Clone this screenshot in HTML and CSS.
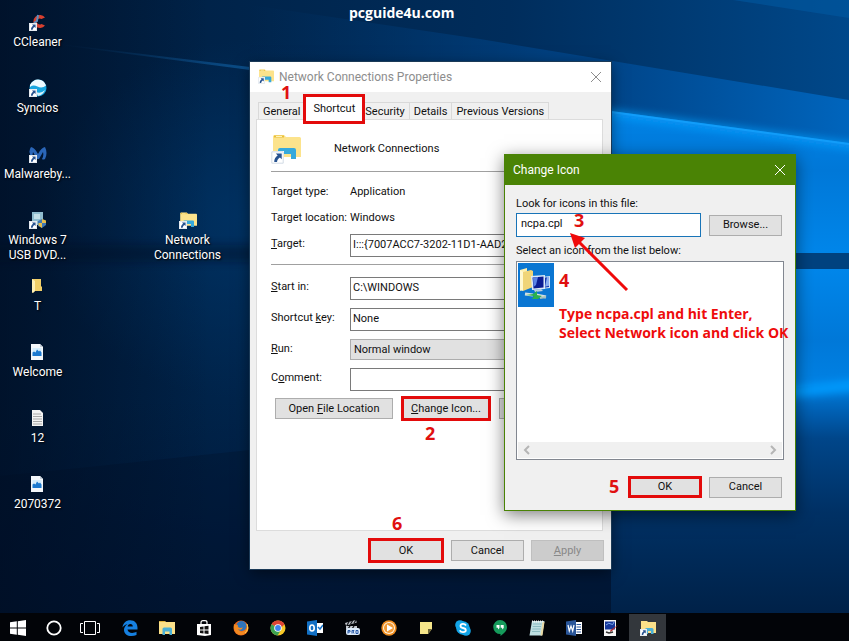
FILE: index.html
```html
<!DOCTYPE html>
<html lang="en">
<head>
<meta charset="utf-8">
<title>Change the icon of a shortcut</title>
<link rel="stylesheet" href="styles.css">
</head>
<body>
<svg class="defs" aria-hidden="true">
  <defs>
    <symbol id="arrow-badge" viewBox="0 0 8 8">
      <path d="M0 0h8v8H0z" fill="#fff"/><path d="M.5 .5h7v7h-7z" fill="none" stroke="#c9d3df" stroke-width=".5"/>
      <path d="M3 1.500h3.600v3.600L5.500 4C4.300 4.700 3.800 5.600 3.700 6.800H2C1.900 4.900 2.700 3.600 4.100 2.700z" fill="#27528f"/>
    </symbol>
    <symbol id="folder" viewBox="0 0 30 30">
      <path d="M2 2.500Q2 1 3.500 1H13l2 2h13.500q1.500 0 1.500 1.500V23H2z" fill="#fce38c"/>
      <path d="M3 1.500h10v2H3z" fill="#e8bf3c"/><path d="M5 2h6v1H5z" fill="#fff3b8"/>
      <path d="M7 24v-8q0-2 2-2h14q2 0 2 2v9h-5v-5h-8v4z" fill="#36a9dc"/>
    </symbol>
    <symbol id="picture" viewBox="0 0 16 18">
      <path d="M2 1h9l3 3v13H2z" fill="#f4f7fa"/><path d="M11 1l3 3h-3z" fill="#c5cfda"/>
      <path d="M3.500 5h9v8h-9z" fill="#d4ecfb"/><path d="M3.500 13V9.500l1.500-1 1.500 1L8 6.500l2 2 1-1 1.500 2V13z" fill="#1c79cf"/>
    </symbol>
    <linearGradient id="sky" x1="0" x2="1" y1="0" y2="0">
      <stop offset="0" stop-color="#001c3c"/><stop offset=".28" stop-color="#00244b"/>
      <stop offset=".6" stop-color="#002d5c"/><stop offset="1" stop-color="#00488a"/>
    </linearGradient>
    <linearGradient id="floor" x1="0" x2="0" y1="0" y2="1">
      <stop offset="0" stop-color="#001a3a" stop-opacity="0"/><stop offset=".6" stop-color="#00183a" stop-opacity=".8"/>
      <stop offset="1" stop-color="#001634"/>
    </linearGradient>
    <linearGradient id="shade" x1="0" x2="1" y1="0" y2="0">
      <stop offset="0" stop-color="#000c20" stop-opacity=".6"/><stop offset="1" stop-color="#000c20" stop-opacity="0"/>
    </linearGradient>
    <linearGradient id="beam" gradientUnits="userSpaceOnUse" x1="250" x2="849" y1="0" y2="0">
      <stop offset="0" stop-color="#003a74" stop-opacity="0"/><stop offset=".6" stop-color="#00488f" stop-opacity=".85"/>
      <stop offset="1" stop-color="#0065bd"/>
    </linearGradient>
    <linearGradient id="ray" gradientUnits="userSpaceOnUse" x1="60" x2="250" y1="0" y2="0">
      <stop offset="0" stop-color="#0e5796" stop-opacity="0"/><stop offset="1" stop-color="#0e5796" stop-opacity=".8"/>
    </linearGradient>
    <linearGradient id="pane" x1="0" x2="0" y1="0" y2="1">
      <stop offset="0" stop-color="#0086ea"/><stop offset=".5" stop-color="#0078d8"/><stop offset="1" stop-color="#0086ea"/>
    </linearGradient>
    <linearGradient id="low" x1="0" x2="0" y1="0" y2="1">
      <stop offset="0" stop-color="#0083e6"/><stop offset=".12" stop-color="#005fb2"/>
      <stop offset=".22" stop-color="#00468a"/><stop offset=".5" stop-color="#003165"/><stop offset="1" stop-color="#001d40"/>
    </linearGradient>
    <radialGradient id="glow"><stop offset="0" stop-color="#003568" stop-opacity=".8"/><stop offset="1" stop-color="#003568" stop-opacity="0"/></radialGradient>
    <filter id="soft" x="-10%" width="120%" y="-100%" height="300%"><feGaussianBlur stdDeviation="4"/></filter>
  </defs>
</svg>

<main class="desktop">
  <svg class="wallpaper" viewBox="0 0 849 641" preserveAspectRatio="none" aria-hidden="true">
    <path d="M0 0h849v641H0z" fill="url(#sky)"/>
    <ellipse cx="250" cy="220" rx="210" ry="180" fill="url(#glow)"/>
    <path d="M733 0L849 18V0z" fill="#005ba6" opacity=".5"/>
    <path d="M250 5L480 39 849 100V145L611 111 250 67z" fill="url(#beam)"/>
    <path d="M60 44L250 67v3L60 45z" fill="url(#ray)"/>
    <path d="M611 111L849 143V255H400V86z" fill="url(#pane)"/>
    <path d="M600 112L860 147" stroke="#0aa0ff" stroke-width="7" opacity=".8" filter="url(#soft)"/>
    <path d="M611 112L849 144" stroke="#17a4ff" stroke-width="2" opacity=".7"/>
    <path d="M611 253H849V269H611z" fill="#00427f"/>
    <path d="M-20 245H270V262H-20z" fill="#001024" opacity=".4" filter="url(#soft)"/>
    <path d="M611 269H849V382L611 410z" fill="url(#pane)"/>
    <path d="M611 410L849 381V641H611z" fill="url(#low)"/>
    <path d="M700 401L860 385" stroke="#009cff" stroke-width="10" filter="url(#soft)"/>
    <path d="M0 400H611V641H0z" fill="url(#floor)"/>
    <path d="M0 476L90 467 250 450 611 411V641H0z" fill="#001027" opacity=".3"/>
    <path d="M0 0H210V641H0z" fill="url(#shade)"/>
  </svg>

  <p class="watermark">pcguide4u.com</p>

  <ul class="icons">
    <li>
      <svg viewBox="0 0 18 18"><path d="M16 4.500A6.500 6.500 0 1 0 16 12.500l-3.500-1.500a3 3 0 1 1 0-5z" fill="#d8402f"/><path d="M9 2l-1 6-3 2" stroke="#5b8fc0" stroke-width="2" fill="none"/><use href="#arrow-badge" y="10" width="8" height="8"/></svg>
      <span>CCleaner</span>
    </li>
    <li>
      <svg viewBox="0 0 18 18"><circle cx="9" cy="9" r="8.500" fill="#18a5df"/><path d="M1 6Q4 .5 9 .5q6 0 8 6Q13 10 8.500 7.500 4 5.500 1 8z" fill="#eefaff"/><path d="M7 13q5 2 9-2-2 5-7 6z" fill="#d8f2fc"/><use href="#arrow-badge" y="10" width="8" height="8"/></svg>
      <span>Syncios</span>
    </li>
    <li>
      <svg viewBox="0 0 18 18"><path d="M2 2q4 1 7 7 3-6 7-7 3 6 0 12-2 1-3 0 2-3 1-7l-4 7H8L4 7q-1 4 0 7Q-2 8 2 2z" fill="#2a66b8"/><use href="#arrow-badge" y="10" width="8" height="8"/></svg>
      <span>Malwareby...</span>
    </li>
    <li>
      <svg viewBox="0 0 18 18"><path d="M3 1h11v13H3z" fill="#8fbccf"/><path d="M5 3h6v5H5z" fill="#c3dfe8"/><path d="M9 10l4-2 4 2v4l-4 3-4-2z" fill="#3f78b5"/><path d="M13 8v4H9.500v2.500L13 17v-5h4V9.500z" fill="#e6bd4c"/><use href="#arrow-badge" y="10" width="8" height="8"/></svg>
      <span>Windows 7<br>USB DVD...</span>
    </li>
    <li>
      <svg viewBox="0 0 18 18"><path d="M3 2h9v7l1 1v4H6l-3 2z" fill="#f1cf68"/><path d="M3 2l3 2v10l-2 2-1-1z" fill="#fff0b4"/></svg>
      <span>T</span>
    </li>
    <li><svg viewBox="0 0 18 18"><use href="#picture" width="16" height="18"/></svg><span>Welcome</span></li>
    <li>
      <svg viewBox="0 0 18 18"><path d="M3 1h8l3 3v13H3z" fill="#f3f3f3"/><path d="M4 5h8M4 7.500h9M4 10h9M4 12.500h9M4 15h9" stroke="#a8a8a8"/></svg>
      <span>12</span>
    </li>
    <li><svg viewBox="0 0 18 18"><use href="#picture" width="16" height="18"/></svg><span>2070372</span></li>
    <li class="second-column">
      <svg viewBox="0 0 18 18"><use href="#folder" y="1" width="18" height="18"/><use href="#arrow-badge" y="10" width="8" height="8"/></svg>
      <span>Network<br>Connections</span>
    </li>
  </ul>

  <section class="window properties" aria-labelledby="properties-title">
    <header class="titlebar">
      <svg class="small-icon" viewBox="0 0 16 16"><use href="#folder" width="16" height="16"/><use href="#arrow-badge" y="8" width="7" height="7"/></svg>
      <h1 id="properties-title">Network Connections Properties</h1>
      <button class="close" aria-label="Close"><svg viewBox="0 0 14 14"><path d="M2 2l10 10M12 2L2 12" stroke="currentColor" fill="none"/></svg></button>
    </header>
    <div class="properties-body">
      <div class="tabs" role="tablist">
        <button role="tab">General</button>
        <button role="tab" class="active" aria-selected="true">Shortcut</button>
        <button role="tab">Security</button>
        <button role="tab">Details</button>
        <button role="tab">Previous Versions</button>
      </div>
      <form class="panel">
        <div class="shortcut-name">
          <svg viewBox="0 0 30 30"><use href="#folder" width="30" height="30"/><use href="#arrow-badge" y="17" width="13" height="13"/></svg>
          <span>Network Connections</span>
        </div>
        <hr>
        <dl class="facts">
          <dt>Target type:</dt><dd>Application</dd>
          <dt>Target location:</dt><dd>Windows</dd>
        </dl>
        <div class="fields">
          <label for="target"><u>T</u>arget:</label><input id="target" value="I:::{7007ACC7-3202-11D1-AAD2-00805FC1270E}">
        </div>
        <hr>
        <div class="fields">
          <label for="start"><u>S</u>tart in:</label><input id="start" value="C:\WINDOWS">
          <label for="key">Shortcut <u>k</u>ey:</label><input id="key" value="None">
          <label for="run"><u>R</u>un:</label><select id="run"><option>Normal window</option></select>
          <label for="comment">C<u>o</u>mment:</label><input id="comment">
        </div>
        <div class="actions">
          <button type="button" class="button open">Open <u>F</u>ile Location</button>
          <button type="button" class="button marked"><u>C</u>hange Icon...</button>
          <button type="button" class="button" aria-label="Advanced"></button>
        </div>
      </form>
      <footer class="buttons">
        <button class="button marked">OK</button>
        <button class="button">Cancel</button>
        <button class="button" disabled><u>A</u>pply</button>
      </footer>
    </div>
    <b class="step step-1">1</b>
    <b class="step step-2">2</b>
    <b class="step step-6">6</b>
  </section>

  <section class="window change-icon" aria-labelledby="change-title">
    <header class="titlebar">
      <h2 id="change-title">Change Icon</h2>
      <button class="close" aria-label="Close"><svg viewBox="0 0 14 14"><path d="M2 2l10 10M12 2L2 12" stroke="currentColor" fill="none"/></svg></button>
    </header>
    <form class="change-body">
      <label for="file">Look for icons in this file:</label>
      <div class="file-row">
        <input id="file" value="ncpa.cpl">
        <button type="button" class="button">Browse...</button>
      </div>
      <p class="list-label" id="list-label">Select an icon from the list below:</p>
      <div class="icon-list" role="listbox" aria-labelledby="list-label">
        <button type="button" class="icon-choice" role="option" aria-selected="true" aria-label="Network">
          <svg viewBox="0 0 36 44">
            <path d="M2 7l7-2v20l-7 3z" fill="#fff0ae"/><path d="M5 9l8-2 2 1v16l-10 4z" fill="#f0d578"/><path d="M2 7l3 2v19l-3-1z" fill="#fff8cf"/>
            <path d="M23 14l9-1v12l-9 1z" fill="#cfe3f5"/><path d="M24 15l7-1v10l-7 1z" fill="#1538b0"/>
            <path d="M13 13l14-1v14l-13 1z" fill="#dcebf7"/><path d="M14.500 14.500l11-1v11l-10 1z" fill="#0a1c92"/><path d="M15 14.500l5-.5-2 8-2.500 2z" fill="#5a83e6"/><path d="M29 14l2-.2v9l-4 1z" fill="#88aef0"/>
            <path d="M16 27l7-1 2 2-8 1z" fill="#b9cede"/>
            <path d="M7 31l8 1M18 32l10 2" stroke="#d5dfdf" stroke-width="3"/><path d="M8 32l7-1 4-3v4l5 1-4 3h-6l2-3z" fill="#2bb14d"/><path d="M22 35l6-1" stroke="#a6c0bb" stroke-width="2"/>
          </svg>
        </button>
        <div class="scrollbar">
          <svg viewBox="0 0 8 10"><path d="M6 1L2 5l4 4" fill="none" stroke="#b5b5b5" stroke-width="2"/></svg>
          <svg viewBox="0 0 8 10"><path d="M2 1l4 4-4 4" fill="none" stroke="#b5b5b5" stroke-width="2"/></svg>
        </div>
      </div>
      <div class="buttons">
        <button type="button" class="button marked">OK</button>
        <button type="button" class="button">Cancel</button>
      </div>
    </form>
    <b class="step step-3">3</b>
    <b class="step step-4">4</b>
    <b class="step step-5">5</b>
    <svg class="pointer" viewBox="0 0 60 60" aria-hidden="true"><path d="M57 57L9 9" stroke="#ef0a0a" stroke-width="3"/><path d="M0 0l15 5-10 10z" fill="#ef0a0a"/></svg>
    <p class="hint">Type ncpa.cpl and hit Enter,<br>Select Network icon and click OK</p>
  </section>
</main>

<nav class="taskbar" aria-label="Taskbar">
  <button aria-label="Start"><svg viewBox="0 0 16 16"><path d="M0 2.300L6.800 1.300V7.500H0zM7.800 1.200L16 0V7.500H7.800zM0 8.500H6.800V14.700L0 13.700zM7.800 8.500H16V16L7.800 14.800z" fill="#fff"/></svg></button>
  <button aria-label="Search"><svg viewBox="0 0 16 16"><circle cx="8" cy="8" r="6.700" fill="none" stroke="#fff" stroke-width="1.800"/></svg></button>
  <button aria-label="Task view"><svg class="wide" viewBox="0 0 20 16"><path d="M4.500 1.500h11v13h-11zM3 3.500H.5v9H3M17 3.500h2.500v9H17" fill="none" stroke="#fff"/></svg></button>
  <button class="app" aria-label="Edge"><svg viewBox="0 0 16 16"><path d="M.5 7.500C1 3 4 .3 8.300.3c4.600 0 7.200 3.200 7.200 7.500v1.700H5.500c.3 2.400 2.300 3.400 4.600 3.400 1.700 0 3.100-.5 4.400-1.200V15c-1.500.7-3.200 1-5 1C5.300 16 2 13.700 2 9.900c0-2.300 1.300-4.400 3.400-5.600C3.500 4.500 1.700 5.600.5 7.500zM5.600 6.600h5.200c0-1.700-.8-2.700-2.400-2.700S5.900 5 5.600 6.600z" fill="#1680e0"/></svg></button>
  <button class="app" aria-label="File Explorer"><svg viewBox="0 0 16 16"><path d="M0 1h6l1 1h9v12H0z" fill="#fbe089"/><path d="M0 1h6v1H0z" fill="#dfb43d"/><path d="M3.500 15V9q0-1.500 1.500-1.500h6.500Q13 7.500 13 9v6h-2.500v-3.500H6V15z" fill="#4bb0d6"/></svg></button>
  <button class="app" aria-label="Store"><svg viewBox="0 0 16 16"><path d="M1 4h14v11l-6 1-8-1z" fill="#fff"/><path d="M5 4V2.500Q5 .7 7 .7h2q2 0 2 1.800V4" fill="none" stroke="#fff" stroke-width="1.200"/><path d="M4 7l3.500-.5v3H4zM8.500 6.300l4-.5v3.700h-4zM4 10.500h3.500v3L4 13zM8.500 10.500h4V14l-4-.4z" fill="#111"/></svg></button>
  <button class="app" aria-label="Firefox"><svg viewBox="0 0 16 16"><circle cx="8" cy="8" r="7.500" fill="#e8641b"/><circle cx="8.500" cy="6" r="5" fill="#2f74ba"/><path d="M1 4q1 1 4 1-1 2 2 3l3-.5Q8 11 5 9q2 4 6 2 4-2 3-7 3 5-1 9-5 4-10 0-3-4-2-9z" fill="#f28a22"/><path d="M14 4q2 6-2 9" stroke="#ffd24a" fill="none"/></svg></button>
  <button class="app" aria-label="Chrome"><svg viewBox="0 0 16 16"><circle cx="8" cy="8" r="7.500" fill="#f7c927"/><path d="M8 8L1.500 4.300A7.500 7.500 0 0 1 14.500 4.300L11 8z" fill="#dd4535"/><path d="M8 8L1.500 4.300A7.500 7.500 0 0 0 7.500 15.500L11 10z" fill="#3ba151"/><circle cx="8" cy="8" r="3.800" fill="#fff"/><circle cx="8" cy="8" r="2.900" fill="#3f83ed"/></svg></button>
  <button class="app" aria-label="Outlook"><svg viewBox="0 0 16 16"><path d="M9 3h7v10H9z" fill="#fff"/><path d="M11 7l2 2 3-4" stroke="#1470c6" stroke-width="1.500" fill="none"/><path d="M0 1.500L10 0v16L0 14.500z" fill="#1270c4"/><ellipse cx="5" cy="8" rx="2.200" ry="3" fill="none" stroke="#fff" stroke-width="1.600"/></svg></button>
  <button class="app" aria-label="Media Player Classic"><svg viewBox="0 0 16 16"><path d="M1 3l11-3 .8 2.500L2 5.500zM2 6h11v3H2z" fill="#c5cad0"/><path d="M3 5l2-3M6.500 4l2-3M10 3l2-3M4 9l2-3M8 9l2-3" stroke="#15181c" stroke-width="1.300"/><rect x="2" y="8" width="14" height="7" rx="2" fill="#dcebfa"/><path d="M4 13.500v-3h2v1.500H4M8 13.500v-3h2l-1 1.500 1 1.500M12 10.500h2v3h-2z" stroke="#2456a6" fill="none"/></svg></button>
  <button class="app" aria-label="Media Player"><svg viewBox="0 0 16 16"><circle cx="8" cy="8" r="7.700" fill="#ef8d1f"/><circle cx="8" cy="8" r="6" fill="#fff3df"/><circle cx="8" cy="8" r="5" fill="#f19a35"/><path d="M6 4.500L12 8l-6 3.500z" fill="#fff"/></svg></button>
  <button class="app" aria-label="Sticky Notes"><svg viewBox="0 0 16 16"><path d="M2 2h12v7l-4 5H2z" fill="#f5e58a"/><path d="M14 9h-4v5z" fill="#6b6336"/></svg></button>
  <button class="app" aria-label="Skype"><svg viewBox="0 0 16 16"><circle cx="5" cy="5" r="4.800" fill="#12a5e8"/><circle cx="11" cy="11" r="4.800" fill="#12a5e8"/><circle cx="8" cy="8" r="6.800" fill="#12a5e8"/><path d="M11 5.500Q10 3.800 8 3.800q-2.500 0-2.500 2T8 8q2.800.4 2.800 2.200T8 12.200q-2.300 0-3.200-1.800" fill="none" stroke="#fff" stroke-width="1.800"/></svg></button>
  <button class="app" aria-label="Hangouts"><svg viewBox="0 0 16 16"><path d="M8 0a7 7 0 0 1 7 7c0 4-3 6.500-6.500 9v-2A7 7 0 1 1 8 0z" fill="#159b5b"/><path d="M4.500 5h3v3L6 9.500V7.700H4.500zM8.700 5h3v3l-1.500 1.500V7.700H8.700z" fill="#fff"/></svg></button>
  <button class="app" aria-label="Notepad"><svg viewBox="0 0 16 16"><path d="M3 1h12.500L13 15.500H.5z" fill="#bfe0e3"/><path d="M13.500 2h2l-2 13.500h-2z" fill="#e9d9a4"/><path d="M4 4h8.500M3.700 6.500H12M3.300 9h8.500M3 11.500h8" stroke="#6aa3ab" stroke-width=".6"/><path d="M3 1.500h12" stroke="#f3f3f3" stroke-width="2" stroke-dasharray="1 1"/></svg></button>
  <button class="app" aria-label="Word"><svg viewBox="0 0 16 16"><path d="M9 2h7v12H9z" fill="#fff"/><path d="M10.500 4.500H15M10.500 7H15M10.500 9.500H15M10.500 12H15" stroke="#2a5699"/><path d="M0 1.500L10 0v16L0 14.500z" fill="#2a5699"/><path d="M2 5l1.300 6L5 6l1.700 5L8 5" fill="none" stroke="#fff" stroke-width="1.200"/></svg></button>
  <button class="app" aria-label="Paint"><svg viewBox="0 0 16 16"><path d="M1 0h12v16H1z" fill="#f5f5f5"/><path d="M2 1.500h10v8H2z" fill="#16379a"/><path d="M3 5q3-3 5-1t3-2" stroke="#7ba7ea" fill="none"/><path d="M15 5L9 11l-2 1 .5-2z" fill="#b42b2b"/><path d="M3 12l3 1 4-1" stroke="#333" stroke-width="1.500" fill="none"/></svg></button>
  <button class="app current" aria-label="Network Connections Properties"><svg viewBox="0 0 16 16"><path d="M1 1h6l1 1h8v11H1z" fill="#fbe089"/><path d="M5 14V9.500Q5 8 6.500 8H12q1.500 0 1.500 1.500V14H11v-3H8v3z" fill="#4bb0d6"/><use href="#arrow-badge" y="9" width="7" height="7"/></svg></button>
</nav>
</body>
</html>
```
FILE: styles.css
```css
* { box-sizing: border-box; }

body {
  margin: 0;
  min-height: 100vh;
  display: flex;
  flex-direction: column;
  overflow: hidden;
  position: relative;
  background: #001530;
  color: #111;
  font: 11px/14px Roboto, "Liberation Sans", sans-serif;
}

h1, h2, p, ul, dl, dd { margin: 0; padding: 0; }
svg { display: block; flex: none; }
button, input, select { font: inherit; color: inherit; border-radius: 0; margin: 0; }
.defs { position: absolute; width: 0; height: 0; }

/* Desktop */
.desktop { flex: 1; }

.wallpaper {
  position: absolute;
  inset: 0;
  width: 100%;
  height: 100%;
}

.watermark {
  position: absolute;
  left: 349px;
  top: 3px;
  color: #fff;
  font: bold 14px/19px "Open Sans", sans-serif;
}

.icons {
  position: relative;
  display: grid;
  grid-template-columns: repeat(3, 75px);
  grid-auto-rows: 66px;
  padding-top: 13px;
  list-style: none;
  color: #fff;
  font-size: 12px;
  line-height: 15px;
  text-align: center;
  text-shadow: 1px 1px 2px #000;
}

.icons li {
  grid-column: 1;
  display: flex;
  flex-direction: column;
  align-items: center;
  gap: 4px;
}

.icons svg { width: 18px; height: 18px; }
.icons .second-column { grid-column: 3; grid-row: 4; }

/* Windows */
.window { position: absolute; background: #f0f0f0; }

.properties {
  left: 250px;
  top: 62px;
  width: 361px;
  box-shadow: 0 0 0 1px #1b3a57, 0 4px 14px rgba(0, 0, 0, .5);
}

.change-icon {
  left: 504px;
  top: 154px;
  width: 292px;
  border: 1px solid #4a8305;
  box-shadow: 0 4px 16px rgba(0, 0, 0, .5);
}

.titlebar {
  display: flex;
  align-items: center;
  gap: 5px;
  height: 30px;
  padding: 0 8px;
  background: #fff;
  color: #8d8d8d;
}

.change-icon .titlebar { background: #4a8305; color: #fff; }
.titlebar h1, .titlebar h2 { flex: 1; font-size: 12px; font-weight: normal; }
.small-icon { width: 16px; height: 16px; }
.close { padding: 0; border: 0; background: none; }
.close svg { width: 14px; height: 14px; }

.button {
  height: 21px;
  min-width: 73px;
  padding: 0;
  border: 1px solid #adadad;
  background: #e1e1e1;
}

.button:disabled { background: #ccc; border-color: #bfbfbf; color: #888; }
.button.marked { min-width: 76px; height: 25px; border: 3px solid #e30b0b; }
.buttons { display: flex; align-items: center; justify-content: flex-end; gap: 7px; }

/* Properties window */
.properties-body { padding: 10px 8px 6px 6px; }
.tabs { display: flex; align-items: flex-end; padding-left: 2px; }

.tabs button {
  height: 17px;
  padding: 1px 4px 0;
  border: 1px solid #d9d9d9;
  border-left: 0;
  border-bottom: 0;
  background: #f0f0f0;
  white-space: nowrap;
}

.tabs button:first-child { border-left: 1px solid #d9d9d9; }
.tabs button:nth-child(3) { padding-left: 1px; }

.tabs .active {
  position: relative;
  height: 30px;
  margin: -8px -1px -5px -2px;
  padding: 0 7px;
  border: 3px solid #e30b0b;
  background: #fff;
}

.panel {
  height: 412px;
  padding: 14px 13px 0 14px;
  border: 1px solid #dcdcdc;
  background: #fff;
}

.shortcut-name { display: flex; align-items: center; gap: 33px; }
.shortcut-name svg { width: 30px; height: 30px; }
.panel hr { height: 1px; margin: 7px 0 13px; border: 0; background: #a0a0a0; }

.facts { display: grid; grid-template-columns: 79px 1fr; row-gap: 12px; margin-bottom: 9px; }

.fields { display: grid; grid-template-columns: 79px 1fr; row-gap: 8px; }
.fields + hr { margin: 7px 0 12px; }
.fields label { padding-top: 3px; }

.fields input {
  height: 23px;
  min-width: 0;
  padding: 0 2px 3px 2px;
  border: 1px solid #7a7a7a;
  background: #fff;
}

.fields select {
  appearance: none;
  height: 21px;
  padding: 0 3px;
  border: 1px solid #adadad;
  background: #e1e1e1;
}

.actions { display: flex; align-items: center; justify-content: flex-end; gap: 8px; margin-top: 5px; }
.actions .button { min-width: 90px; }
.actions .open { min-width: 118px; }
.properties .buttons { margin-top: 7px; margin-right: -1px; }

/* Change Icon window */
.change-body { padding: 12px 11px 12px 11px; }
.file-row { display: flex; align-items: center; gap: 8px; padding-right: 2px; margin-top: 2px; }

.file-row input {
  flex: 1;
  min-width: 0;
  height: 24px;
  padding: 0 4px 3px;
  border: 1px solid #1874b8;
  background: #fff;
}

.list-label { margin: 7px 0 3px; }

.icon-list {
  display: flex;
  flex-direction: column;
  justify-content: space-between;
  align-items: flex-start;
  height: 199px;
  padding: 1px;
  border: 1px solid #828790;
  background: #fff;
}

.icon-choice { width: 36px; height: 44px; padding: 0; border: 0; background: #0a76d2; }

.scrollbar {
  align-self: stretch;
  display: flex;
  align-items: center;
  justify-content: space-between;
  height: 16px;
  padding: 0 5px;
  background: #f0f0f0;
}

.scrollbar svg { width: 8px; height: 10px; }
.change-icon .buttons { margin-top: 16px; padding-right: 2px; }
.change-icon .marked { min-width: 74px; height: 22px; }

/* Instruction marks laid over the windows */
.step {
  position: absolute;
  color: #e01010;
  font: bold 18px/20px "Open Sans", sans-serif;
}

.step-1 { left: 31px; top: 20px; }
.step-2 { left: 175px; top: 361px; }
.step-6 { left: 142px; top: 451px; }
.step-3 { left: 69px; top: 55px; }
.step-4 { left: 54px; top: 115px; }
.step-5 { left: 104px; top: 321px; }

.pointer { position: absolute; left: 65px; top: 78px; width: 60px; height: 60px; }

.hint {
  position: absolute;
  left: 54px;
  top: 149px;
  color: #ee0c0c;
  font: bold 14px/19px "Open Sans", sans-serif;
  white-space: nowrap;
}

/* Taskbar */
.taskbar { position: relative; display: flex; height: 28px; padding-top: 1px; background: #020408; }

.taskbar button {
  display: flex;
  align-items: center;
  justify-content: center;
  width: 36px;
  padding: 0;
  border: 0;
  background: none;
}

.taskbar svg { width: 16px; height: 16px; }
.taskbar .wide { width: 20px; }
.taskbar .app { width: 37px; }
.taskbar button:nth-child(3) { margin-right: 3px; }
.taskbar .current { background: #33373c; }
```
